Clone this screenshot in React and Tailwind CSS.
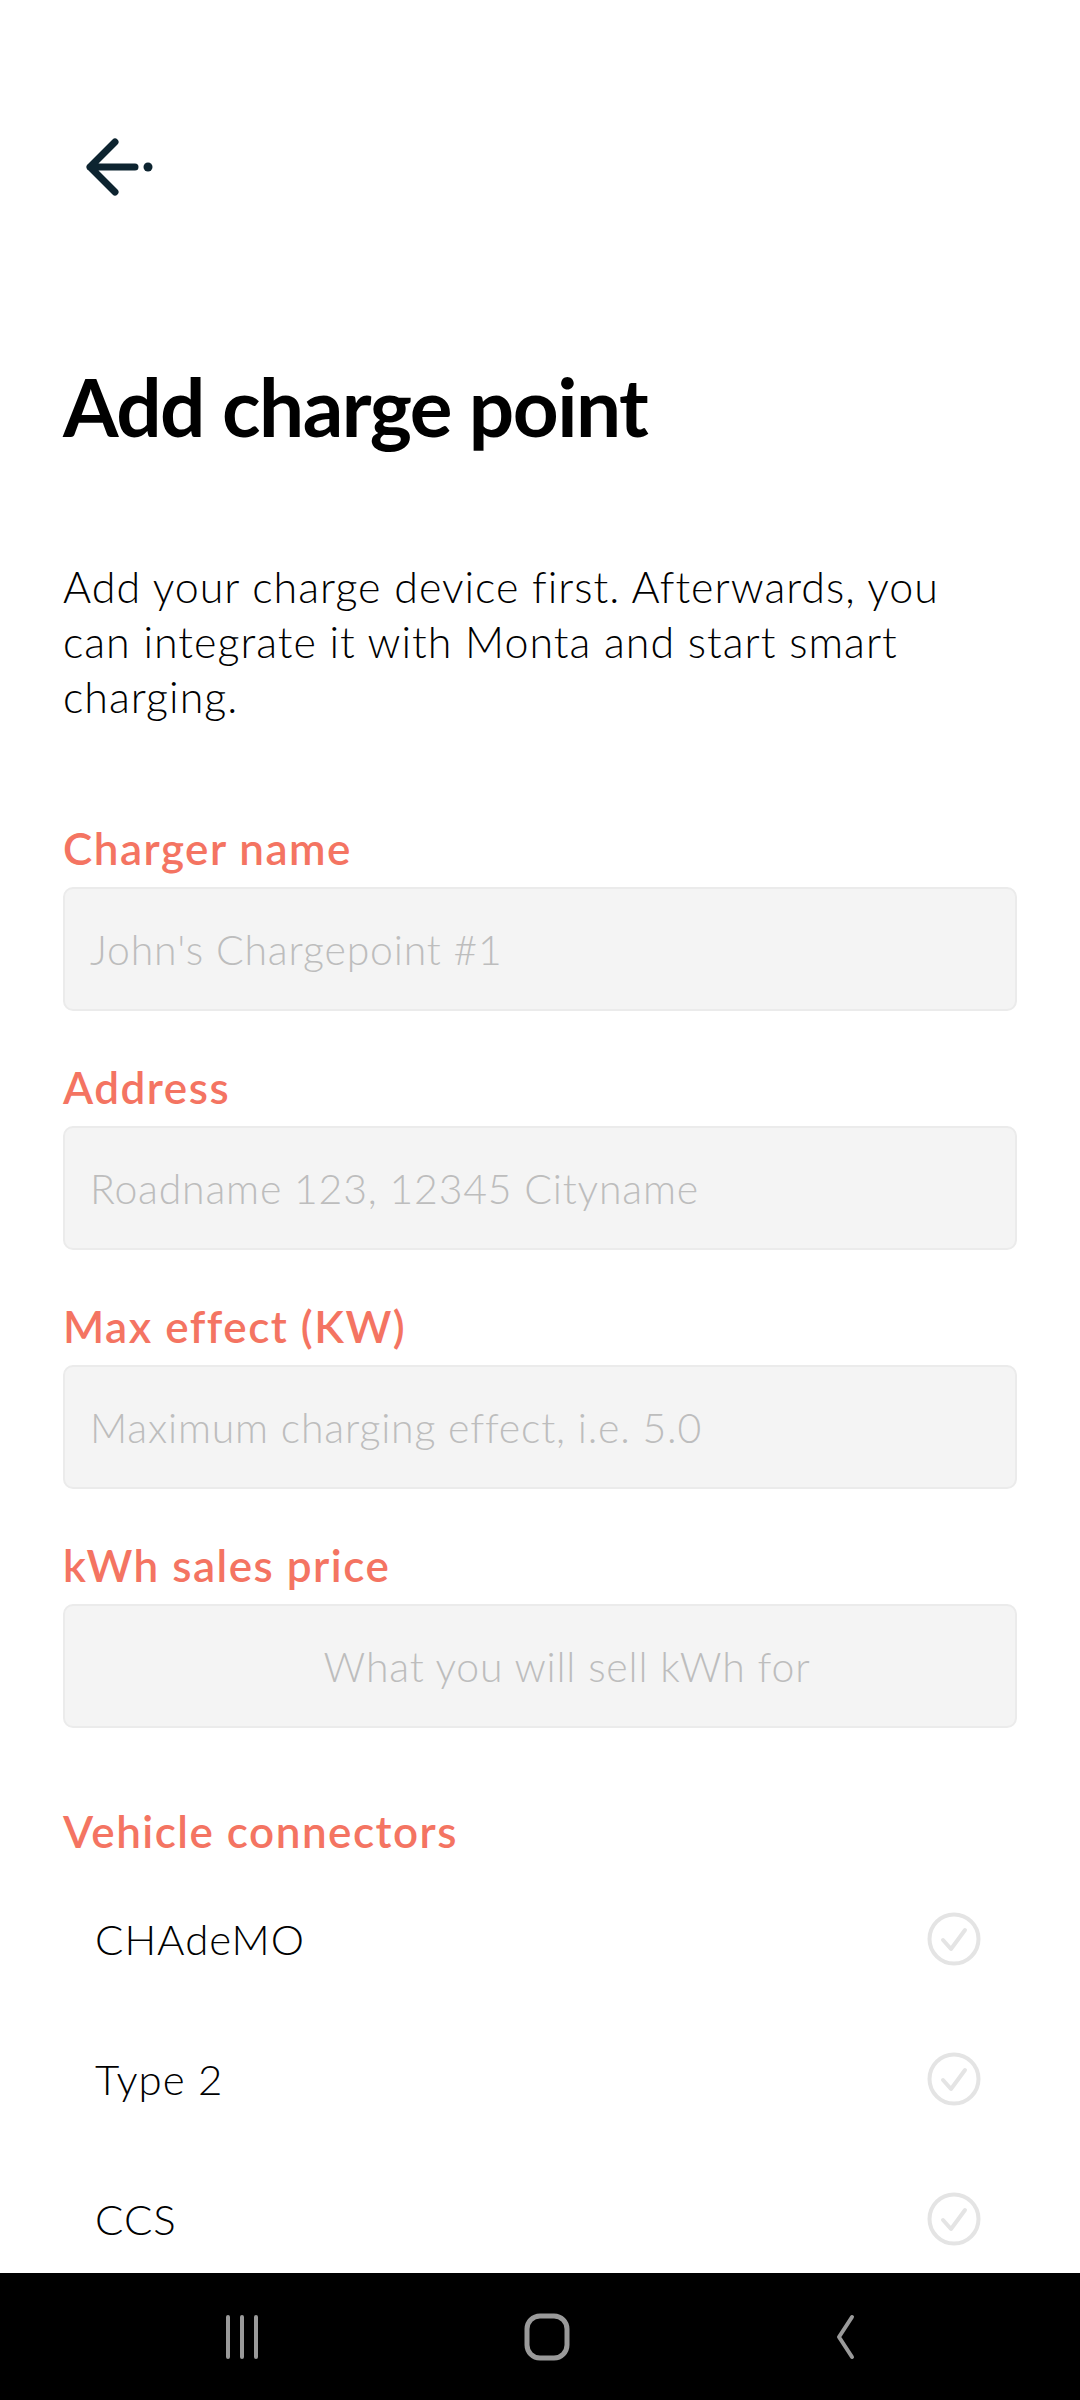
import { useState } from 'react'

const FIELDS = [
  { id: 'name', label: 'Charger name', placeholder: "John's Chargepoint #1" },
  { id: 'address', label: 'Address', placeholder: 'Roadname 123, 12345 Cityname' },
  { id: 'effect', label: 'Max effect (KW)', placeholder: 'Maximum charging effect, i.e. 5.0' },
  { id: 'price', label: 'kWh sales price', placeholder: 'What you will sell kWh for', centered: true },
]

const CONNECTORS = ['CHAdeMO', 'Type 2', 'CCS']

function BackArrow() {
  return (
    <svg width="70" height="58" viewBox="0 0 70 58" fill="none">
      <path
        d="M30 4 L5 29 L30 54 M5 29 H50"
        stroke="#0d2430"
        strokeWidth="7"
        strokeLinecap="round"
        strokeLinejoin="round"
      />
      <circle cx="63" cy="29" r="4.5" fill="#0d2430" />
    </svg>
  )
}

function CheckCircle() {
  return (
    <svg width="56" height="56" viewBox="0 0 56 56" fill="none">
      <circle cx="28" cy="28" r="24.5" stroke="#e4e4e4" strokeWidth="4" />
      <path
        d="M17 29 L25 38 L39 19"
        stroke="#e4e4e4"
        strokeWidth="4"
        strokeLinecap="round"
        strokeLinejoin="round"
      />
    </svg>
  )
}

export default function App() {
  const [values, setValues] = useState({})
  const [selected, setSelected] = useState([])

  function toggle(c) {
    setSelected((s) => (s.includes(c) ? s.filter((x) => x !== c) : [...s, c]))
  }

  return (
    <div className="w-[1080px] h-[2400px] bg-white flex flex-col font-['Lato','Noto_Sans',sans-serif]">
      <main className="flex-1 overflow-hidden px-[63px]">
        <div className="pt-[138px] pl-[22px]">
          <BackArrow />
        </div>

        <h1 className="mt-[162px] text-[80px] leading-[96px] font-bold tracking-[-1.5px] text-black">
          Add charge point
        </h1>

        <p className="mt-[105px] text-[43px] leading-[55px] font-light tracking-[1px] text-black">
          Add your charge device first. Afterwards, you can integrate it with Monta and start smart
          charging.
        </p>

        <div className="mt-[100px] flex flex-col gap-[52px]">
          {FIELDS.map((f) => (
            <div key={f.id}>
              <label className="block text-[44px] leading-[48px] font-semibold tracking-[1.5px] text-[#f47462]">
                {f.label}
              </label>
              <input
                value={values[f.id] ?? ''}
                onChange={(e) => setValues({ ...values, [f.id]: e.target.value })}
                placeholder={f.placeholder}
                className={`mt-[15px] w-full h-[124px] rounded-[10px] bg-[#f4f4f4] border-2 border-[#ebebeb] text-[41px] font-light tracking-[0.8px] text-black placeholder:text-[#bdbdbd] outline-none ${
                  f.centered ? 'text-center pl-[54px]' : 'pl-[25px]'
                }`}
              />
            </div>
          ))}
        </div>

        <div className="mt-[79px] text-[44px] leading-[48px] font-semibold tracking-[1.5px] text-[#f47462]">
          Vehicle connectors
        </div>

        <ul className="mt-[14px]">
          {CONNECTORS.map((c) => (
            <li
              key={c}
              onClick={() => toggle(c)}
              className="h-[140px] flex items-center justify-between pl-[32px] pr-[35px]"
            >
              <span className="text-[42px] font-light tracking-[1px] text-black">{c}</span>
              <CheckCircle />
            </li>
          ))}
        </ul>
      </main>

      <nav className="h-[127px] bg-black flex items-center justify-around px-[90px]">
        <svg width="44" height="46" viewBox="0 0 44 46" fill="none">
          <path d="M8 3 V43 M22 3 V43 M36 3 V43" stroke="#9a9a9a" strokeWidth="4" strokeLinecap="round" />
        </svg>
        <svg width="48" height="48" viewBox="0 0 48 48" fill="none">
          <rect x="4" y="3" width="40" height="42" rx="13" stroke="#9a9a9a" strokeWidth="5" />
        </svg>
        <svg width="30" height="48" viewBox="0 0 30 48" fill="none">
          <path d="M22 4 L9 24 L22 44" stroke="#9a9a9a" strokeWidth="4" strokeLinecap="round" strokeLinejoin="round" />
        </svg>
      </nav>
    </div>
  )
}
